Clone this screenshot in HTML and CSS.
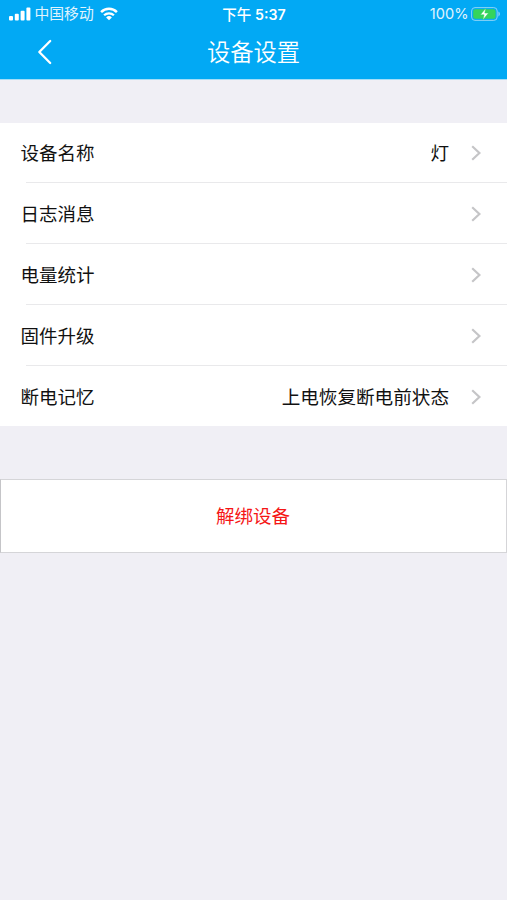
FILE: index.html
```html
<!DOCTYPE html>
<html lang="zh-CN">
<head>
<meta charset="utf-8">
<title>设备设置</title>
<link rel="stylesheet" href="styles.css">
</head>
<body>
<header class="header">
  <div class="status">
    <div class="status-left">
      <svg class="signal" width="22" height="14" viewBox="0 0 22 14" fill="#fff"><rect x="0" y="9" width="4" height="4.4" rx="1"/><rect x="5.8" y="6.8" width="4" height="6.6" rx="1"/><rect x="11.6" y="3.8" width="4" height="9.6" rx="1"/><rect x="17.4" y="0.6" width="4" height="12.8" rx="1"/></svg>
      <span class="carrier">中国移动</span>
      <svg class="wifi" width="18" height="14" viewBox="0 0 18 14" fill="none" stroke="#fff"><path d="M1.1 5.1a11.2 11.2 0 0 1 15.8 0" stroke-width="2.5"/><path d="M4.1 8.3a7 7 0 0 1 9.8 0" stroke-width="2.3"/><path d="M9 13.3L6.1 10.4a4.1 4.1 0 0 1 5.8 0z" fill="#fff" stroke="none"/></svg>
    </div>
    <div class="time">下午 <b>5:37</b></div>
    <div class="status-right">
      <span class="percent">100%</span>
      <svg class="battery" width="30" height="14" viewBox="0 0 30 14"><rect x="0.6" y="0.6" width="25.6" height="12.8" rx="3.4" fill="none" stroke="#8bd3f7" stroke-width="1"/><rect x="2.2" y="2.2" width="22.4" height="9.6" rx="2" fill="#35d45c"/><path d="M27.4 4.6c2 .8 2 4 0 4.8z" fill="#8bd3f7"/><path d="M14.8 1.2L9.4 7.8h3.7l-1.3 5.2 5.7-6.9h-3.7z" fill="#fff" stroke="#35d45c" stroke-width="0.5"/></svg>
    </div>
  </div>
  <div class="nav">
    <svg class="back" width="16" height="26" viewBox="0 0 16 26" fill="none" stroke="#fff" stroke-width="2.3" stroke-linecap="round" stroke-linejoin="round"><path d="M13.2 2L2.3 13l10.9 11"/></svg>
    <h1 class="title">设备设置</h1>
  </div>
</header>
<main>
  <ul class="list">
    <li class="row"><span class="label">设备名称</span><span class="value">灯</span><svg class="chevron" viewBox="0 0 10 16"><path d="M1.2 1.2L8.4 8l-7.2 6.8"/></svg></li>
    <li class="row"><span class="label">日志消息</span><svg class="chevron" viewBox="0 0 10 16"><path d="M1.2 1.2L8.4 8l-7.2 6.8"/></svg></li>
    <li class="row"><span class="label">电量统计</span><svg class="chevron" viewBox="0 0 10 16"><path d="M1.2 1.2L8.4 8l-7.2 6.8"/></svg></li>
    <li class="row"><span class="label">固件升级</span><svg class="chevron" viewBox="0 0 10 16"><path d="M1.2 1.2L8.4 8l-7.2 6.8"/></svg></li>
    <li class="row"><span class="label">断电记忆</span><span class="value">上电恢复断电前状态</span><svg class="chevron" viewBox="0 0 10 16"><path d="M1.2 1.2L8.4 8l-7.2 6.8"/></svg></li>
  </ul>
  <button class="unbind">解绑设备</button>
</main>
</body>
</html>
```

FILE: styles.css
```css
* {
  box-sizing: border-box;
}

body {
  margin: 0;
  min-height: 100vh;
  background: #f0eff5;
  color: #111;
  font-family: Inter, "Noto Sans CJK SC", sans-serif;
}

.header {
  height: 80px;
  background: #02a9f4;
  border-bottom: 1px solid #a5def8;
  color: #fff;
}

.status {
  display: grid;
  grid-template-columns: 1fr auto 1fr;
  align-items: center;
  height: 27px;
  padding: 0 6.5px 0 8.5px;
  font-size: 15px;
  line-height: 27px;
}

.status-left,
.status-right {
  display: flex;
  align-items: center;
}

.status-left {
  font-size: 14.8px;
}

.signal,
.wifi,
.battery {
  margin-top: -1px;
}

.status-right {
  justify-content: flex-end;
  font-size: 14.6px;
}

.carrier {
  margin: 0 6px 0 4px;
  padding-top: 1px;
  opacity: 0.88;
}

.time {
  padding-right: 1px;
  font-size: 14.5px;
  font-weight: 500;
}

.time b {
  font-weight: 600;
  font-size: 14.2px;
}

.percent {
  margin-right: 2px;
  padding-top: 1px;
  opacity: 0.88;
}

.nav {
  display: grid;
  grid-template-columns: 1fr auto 1fr;
  align-items: center;
  height: 50px;
  padding: 0 37px;
}

.title {
  margin: 0;
  padding-top: 2px;
  font-size: 23.3px;
  line-height: 48px;
  font-weight: 350;
}

.list {
  margin: 43px 0 0;
  padding: 0;
  list-style: none;
  background: #fff;
}

.row {
  display: flex;
  align-items: center;
  height: 61px;
  padding: 0 26.5px 0 20.5px;
  font-size: 18.5px;
  line-height: 28px;
  background: linear-gradient(#e9e9eb, #e9e9eb) 26px 100% / 100% 1px no-repeat;
}

.row:first-child {
  height: 60px;
}

.row:last-child {
  height: 60px;
  padding-top: 2px;
  background: none;
}

.label {
  flex: 1;
}

.value {
  margin-right: 21.5px;
  font-size: 18.6px;
}

.chevron {
  width: 10px;
  height: 16px;
  fill: none;
  stroke: #c5c5c7;
  stroke-width: 2.2;
}

.unbind {
  display: block;
  width: 100%;
  height: 74px;
  margin: 53px 0 0;
  padding: 0 1px 2px 0;
  border: 1px solid #d5d5d8;
  border-left-color: #c5c5c8;
  border-radius: 0;
  background: #fff;
  color: #f51616;
  font-family: inherit;
  font-size: 18.5px;
}
```
